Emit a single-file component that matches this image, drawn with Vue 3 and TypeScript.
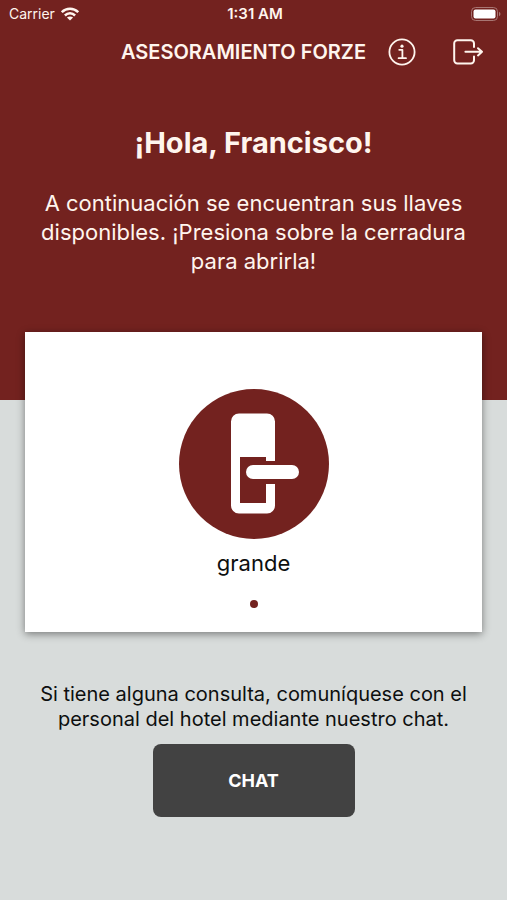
<script setup lang="ts">
import { ref } from 'vue'

interface Lock {
  id: number
  name: string
}

const guest = ref('Francisco')
const locks = ref<Lock[]>([{ id: 1, name: 'grande' }])
const active = ref(0)
</script>

<template>
  <div class="screen">
    <header class="hero">
      <div class="status">
        <div class="carrier">
          <span>Carrier</span>
          <svg class="wifi" viewBox="0 0 18 14" aria-hidden="true">
            <g fill="none" stroke="currentColor" stroke-width="2.5">
              <path d="M0.8 5.2C5.4 0.6 12.6 0.6 17.2 5.2" />
              <path d="M3.9 8.5C6.8 5.6 11.2 5.6 14.1 8.5" />
            </g>
            <path d="M9 13.6L5.9 10.6C7.6 9 10.4 9 12.1 10.6Z" fill="currentColor" />
          </svg>
        </div>
        <span class="time">1:31 AM</span>
        <svg class="battery" viewBox="0 0 30 14" aria-hidden="true">
          <rect x="0.5" y="0.5" width="26" height="13" rx="4" fill="none" stroke="#a87673" />
          <rect x="2.5" y="2.5" width="22" height="9" rx="2" fill="#fff" />
          <path d="M28 4.8C30 5.6 30 8.4 28 9.2Z" fill="#a87673" />
        </svg>
      </div>

      <nav class="bar">
        <span class="brand">ASESORAMIENTO FORZE</span>
        <button class="icon-button" type="button" aria-label="Información">
          <svg viewBox="0 0 28 28" width="28" height="28" fill="none" stroke="currentColor" stroke-width="1.8">
            <circle cx="14" cy="14" r="12.6" />
            <path d="M11.2 11.8H14.4V20M10.6 20.2H18" stroke-linecap="round" stroke-linejoin="round" />
            <circle cx="14" cy="8.2" r="1.6" fill="currentColor" stroke="none" />
          </svg>
        </button>
        <button class="icon-button exit" type="button" aria-label="Salir">
          <svg viewBox="0 0 32 28" width="32" height="28" fill="none" stroke="currentColor" stroke-width="2" stroke-linecap="round" stroke-linejoin="round">
            <path d="M22 9V5.400A3.200 3.200 0 0 0 18.800 2.200H5.400A3.200 3.200 0 0 0 2.200 5.400V22.200A3.200 3.200 0 0 0 5.400 25.400H18.800A3.200 3.200 0 0 0 22 22.200V18.600" />
            <path d="M13.4 13.8H29.6M26 10.2L30 13.8L26 17.4" />
          </svg>
        </button>
      </nav>

      <h1 class="greeting">¡Hola, {{ guest }}!</h1>
      <p class="intro">A continuación se encuentran sus llaves disponibles. ¡Presiona sobre la cerradura para abrirla!</p>
    </header>

    <main class="content">
      <section class="card">
        <button class="lock" type="button">
          <svg viewBox="0 0 150 150" width="150" height="150" aria-hidden="true">
            <circle cx="75" cy="75" r="75" fill="#73221f" />
            <path
              fill="#fff"
              d="M60 24.5H88A8 8 0 0 1 96 32.500V72H87V68H61V114H87V95H96V116A8 8 0 0 1 88 124.500H60A8 8 0 0 1 52 116V32.500A8 8 0 0 1 60 24.500Z"
            />
            <rect x="67" y="76" width="53" height="14" rx="7" fill="#fff" />
          </svg>
          <span class="lock-name">{{ locks[active].name }}</span>
        </button>
        <div class="dots">
          <span v-for="lock in locks" :key="lock.id" class="dot"></span>
        </div>
      </section>

      <p class="help">Si tiene alguna consulta, comuníquese con el personal del hotel mediante nuestro chat.</p>
      <button class="chat" type="button">CHAT</button>
    </main>
  </div>
</template>

<style>
body {
  background: #d8dcdb;
}
</style>

<style scoped>
.screen {
  min-height: 100vh;
  background: #d8dcdb;
  font-family: Inter, "Liberation Sans", sans-serif;
  color: #0d0f0f;
}

button {
  border: 0;
  padding: 0;
  font: inherit;
  color: inherit;
  background: none;
  cursor: pointer;
}

.hero {
  padding-bottom: 124px;
  background: #73221f;
  color: #fff5ee;
}

.status {
  display: grid;
  grid-template-columns: 1fr auto 1fr;
  align-items: center;
  height: 27px;
  padding: 0 6px 0 9px;
  font-size: 14px;
}

.carrier {
  display: flex;
  align-items: center;
  gap: 6px;
}

.wifi {
  width: 18px;
  height: 14px;
}

.time {
  font-size: 15px;
  font-weight: 600;
}

.battery {
  width: 30px;
  height: 14px;
  justify-self: end;
}

.bar {
  display: flex;
  align-items: center;
  justify-content: flex-end;
  height: 50px;
  padding-right: 23px;
}

.brand {
  margin-right: 22px;
  font-size: 20px;
  font-weight: 600;
  white-space: nowrap;
}

.icon-button {
  display: flex;
}

.exit {
  margin-left: 36px;
}

.greeting {
  margin: 48px 16px 0;
  font-size: 29px;
  line-height: 36px;
  font-weight: 700;
  text-align: center;
}

.intro {
  margin: 28px 32px 0;
  font-size: 22px;
  line-height: 29px;
  text-align: center;
}

.content {
  display: flex;
  flex-direction: column;
  align-items: center;
  margin-top: -68px;
  padding: 0 25px 40px;
}

.card {
  display: flex;
  flex-direction: column;
  align-items: center;
  align-self: stretch;
  padding: 57px 16px 24px;
  background: #fff;
  box-shadow: 0 2px 8px rgba(0, 0, 0, 0.45);
}

.lock {
  display: flex;
  flex-direction: column;
  align-items: center;
}

.lock-name {
  margin-top: 8px;
  font-size: 22px;
  line-height: 32px;
}

.dots {
  display: flex;
  gap: 8px;
  margin-top: 21px;
}

.dot {
  width: 8px;
  height: 8px;
  border-radius: 50%;
  background: #73221f;
}

.help {
  margin: 50px 0 0;
  font-size: 20px;
  line-height: 25px;
  text-align: center;
}

.chat {
  width: 202px;
  height: 73px;
  margin-top: 12px;
  border-radius: 8px;
  background: #424242;
  color: #fff;
  font-size: 18px;
  font-weight: 700;
}
</style>
